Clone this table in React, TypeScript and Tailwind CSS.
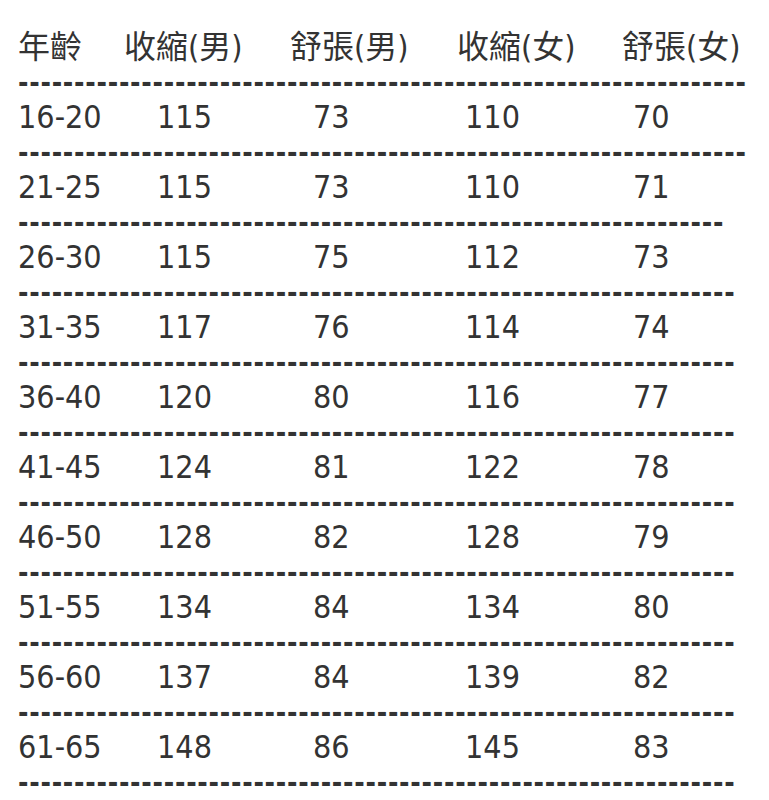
import React from "react";

const rows = [
  ["16-20", "115", "73", "110", "70"],
  ["21-25", "115", "73", "110", "71"],
  ["26-30", "115", "75", "112", "73"],
  ["31-35", "117", "76", "114", "74"],
  ["36-40", "120", "80", "116", "77"],
  ["41-45", "124", "81", "122", "78"],
  ["46-50", "128", "82", "128", "79"],
  ["51-55", "134", "84", "134", "80"],
  ["56-60", "137", "84", "139", "82"],
  ["61-65", "148", "86", "145", "83"],
];

// number of hyphens in each separator line (after header, then after each row)
const dashCounts = [65, 65, 63, 64, 64, 64, 64, 64, 64, 64, 64];

function Dashes({ n }: { n: number }) {
  return (
    <div className="whitespace-nowrap text-[28px] font-bold tracking-[0.75px]">
      {"-".repeat(n)}
    </div>
  );
}

export default function App() {
  return (
    <div
      className="min-h-screen bg-white pl-[18px] pt-[30px] text-[32px] leading-[35px] text-[#333333]"
      style={{ fontFamily: '"DejaVu Sans Condensed", "Noto Sans", "Noto Sans CJK TC", sans-serif' }}
    >
      <div className="flex whitespace-nowrap">
        <span className="w-[106px] shrink-0">年齡</span>
        <span className="w-[166px] shrink-0">收縮(男)</span>
        <span className="w-[167px] shrink-0">舒張(男)</span>
        <span className="w-[165px] shrink-0">收縮(女)</span>
        <span>舒張(女)</span>
      </div>
      <Dashes n={dashCounts[0]} />
      {rows.map((r, i) => (
        <React.Fragment key={r[0]}>
          <div className="flex whitespace-nowrap">
            <span className="w-[139px] shrink-0">{r[0]}</span>
            <span className="w-[156px] shrink-0">{r[1]}</span>
            <span className="w-[152px] shrink-0">{r[2]}</span>
            <span className="w-[168px] shrink-0">{r[3]}</span>
            <span>{r[4]}</span>
          </div>
          <Dashes n={dashCounts[i + 1]} />
        </React.Fragment>
      ))}
    </div>
  );
}
